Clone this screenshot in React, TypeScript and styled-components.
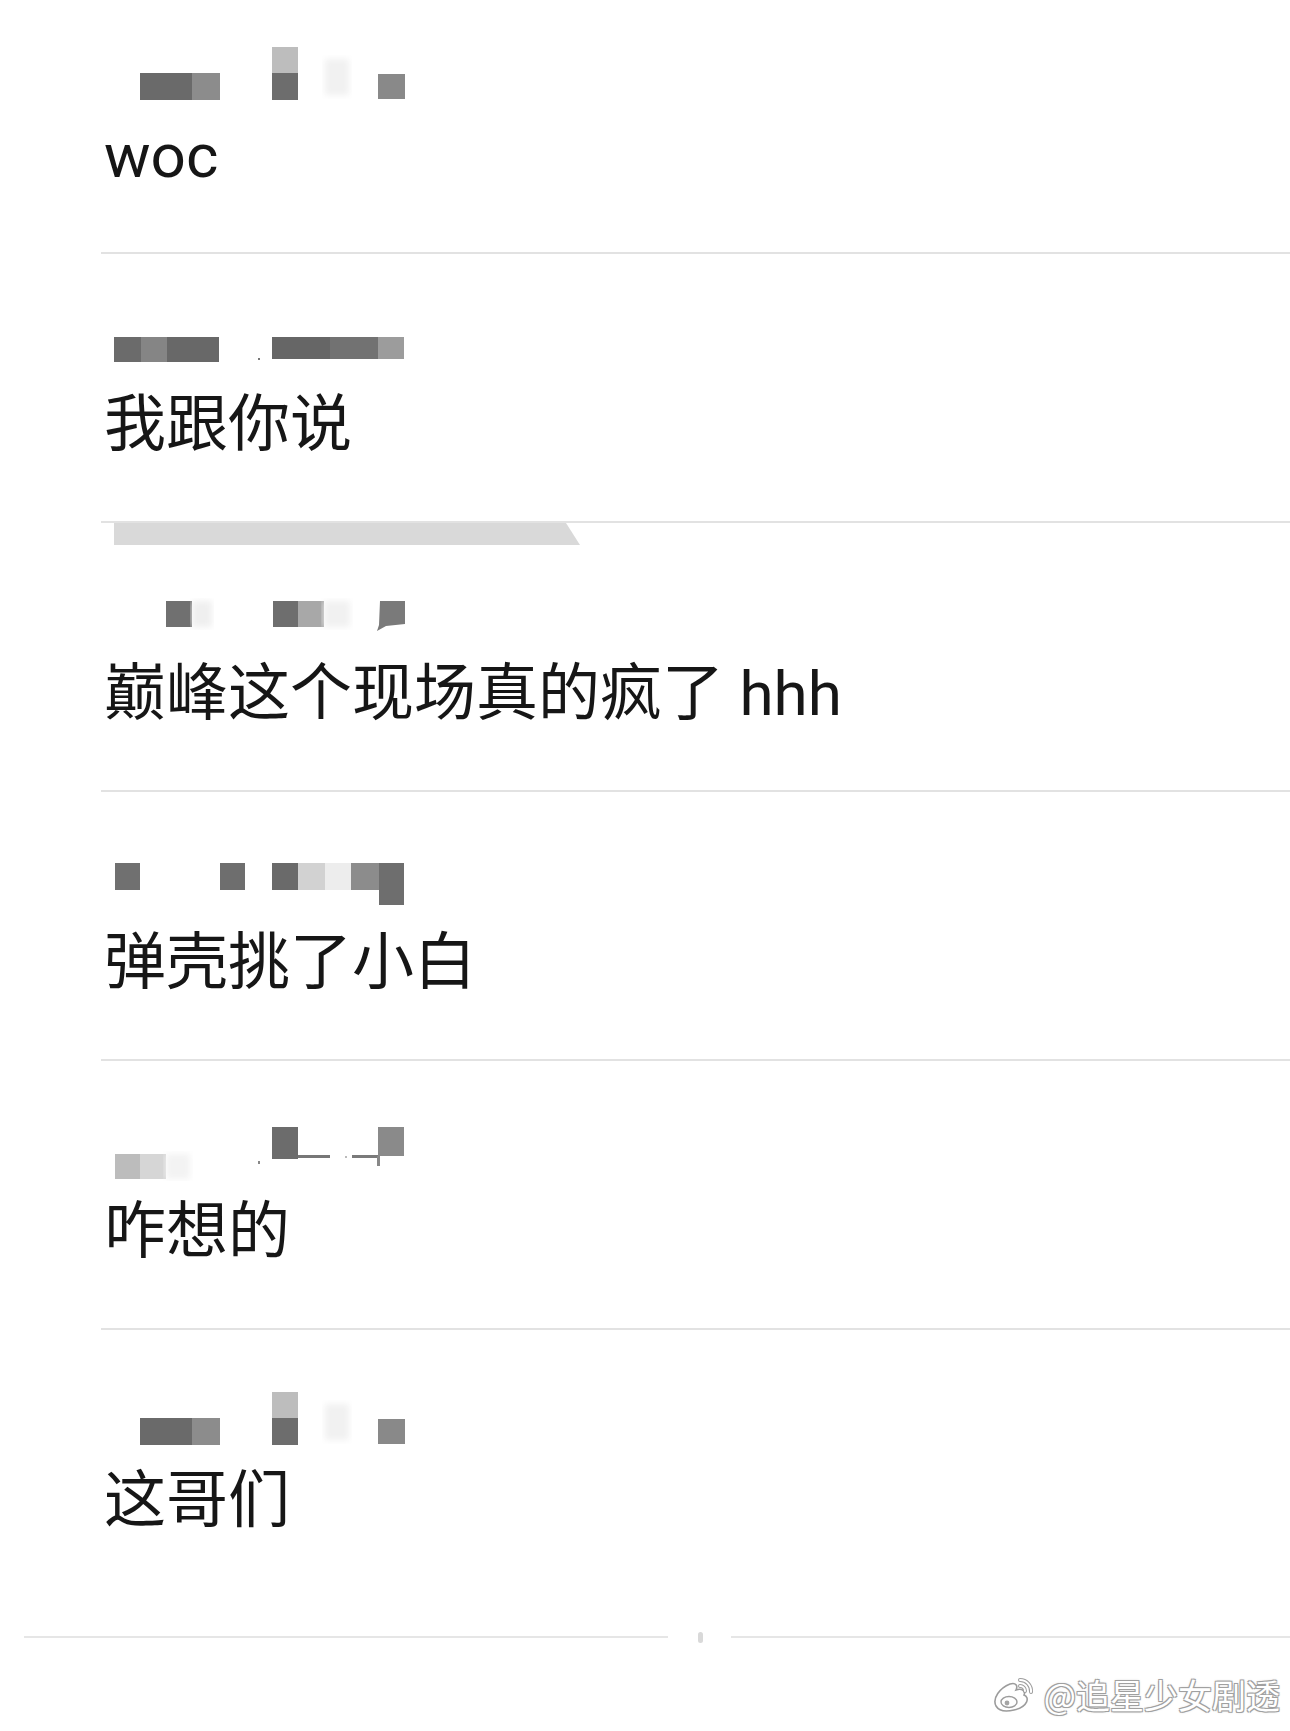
import React from 'react';
import styled, {createGlobalStyle} from 'styled-components';

const GlobalStyle = createGlobalStyle`
    html, body {
        margin: 0;
        padding: 0;
        background: #fff;
    }
    body {
        font-family: Roboto, "Noto Sans CJK SC", sans-serif;
    }
`;

const Page = styled.div`
    width: 1290px;
    height: 1731px;
    overflow: hidden;
    background: #fff;
    display: flex;
    flex-direction: column;
`;

const Feed = styled.div`
    display: flex;
    flex-direction: column;
`;

const Comment = styled.div<{$top: number; $bottom?: number; $last?: boolean}>`
    margin-left: 101px;
    padding: ${p => p.$top}px 0 ${p => p.$bottom ?? 65}px 3px;
    border-bottom: ${p => (p.$last ? 'none' : '2px solid #e2e2e2')};
`;

const RedactBar = styled.div`
    width: 466px;
    height: 22px;
    margin: 0 0 18px 10px;
    background: #d9d9d9;
    clip-path: polygon(0 0, 97% 0, 100% 100%, 0 100%);
`;

const Mosaic = styled.svg`
    display: block;
    margin-left: -3px;
    width: 320px;
    height: 80px;
`;

const Body = styled.div`
    margin-top: 20px;
    font-size: 62px;
    line-height: 62px;
    height: 62px;
    color: #161616;
    white-space: nowrap;
`;

const Divider = styled.div`
    display: flex;
    align-items: center;
    height: 12px;
    margin-left: 24px;
`;

const Rule = styled.div<{$w?: number}>`
    height: 2px;
    background: #e6e6e6;
    ${p => (p.$w ? `width: ${p.$w}px;` : 'flex: 1;')}
`;

const Dot = styled.div`
    width: 5px;
    height: 11px;
    margin: 0 28px 0 30px;
    border-radius: 3px;
    background: #d9d9d9;
`;

const Footer = styled.div`
    display: flex;
    justify-content: flex-end;
    align-items: center;
    gap: 9px;
    margin-top: 32px;
    padding-right: 10px;
`;

const Handle = styled.span`
    font-family: "Noto Sans CJK SC", sans-serif;
    font-size: 34px;
    line-height: 40px;
    color: #fff;
    text-shadow: 1px 1px 0 #a0a0a0, -1px -1px 0 #a0a0a0, 1px -1px 0 #a0a0a0, -1px 1px 0 #a0a0a0, 0 0 3px #b5b5b5;
`;

type Block = {x: number; y: number; w: number; h: number; c: string; blur?: boolean};

// mosaic blocks, x/y relative to the mosaic box
const names: Block[][] = [
    [
        {x: 39, y: 48, w: 52, h: 27, c: '#6a6a6a'},
        {x: 91, y: 48, w: 28, h: 27, c: '#8c8c8c'},
        {x: 171, y: 22, w: 26, h: 26, c: '#bdbdbd'},
        {x: 171, y: 48, w: 26, h: 27, c: '#6d6d6d'},
        {x: 224, y: 34, w: 24, h: 36, c: '#f1f1f1', blur: true},
        {x: 277, y: 49, w: 27, h: 25, c: '#898989'},
    ],
    [
        {x: 13, y: 43, w: 27, h: 25, c: '#6b6b6b'},
        {x: 40, y: 43, w: 26, h: 25, c: '#858585'},
        {x: 66, y: 43, w: 52, h: 25, c: '#686868'},
        {x: 157, y: 64, w: 2, h: 2, c: '#777'},
        {x: 171, y: 43, w: 58, h: 22, c: '#666'},
        {x: 229, y: 43, w: 48, h: 22, c: '#727272'},
        {x: 277, y: 43, w: 26, h: 22, c: '#9c9c9c'},
    ],
    [
        {x: 65, y: 38, w: 26, h: 26, c: '#707070'},
        {x: 91, y: 38, w: 20, h: 26, c: '#efefef', blur: true},
        {x: 172, y: 38, w: 25, h: 26, c: '#6e6e6e'},
        {x: 197, y: 38, w: 26, h: 26, c: '#a8a8a8'},
        {x: 223, y: 38, w: 26, h: 26, c: '#f1f1f1', blur: true},
    ],
    [
        {x: 14, y: 31, w: 25, h: 27, c: '#707070'},
        {x: 119, y: 31, w: 25, h: 27, c: '#6e6e6e'},
        {x: 171, y: 31, w: 26, h: 27, c: '#6a6a6a'},
        {x: 197, y: 31, w: 27, h: 27, c: '#d2d2d2'},
        {x: 224, y: 31, w: 26, h: 27, c: '#ededed'},
        {x: 250, y: 31, w: 28, h: 27, c: '#8c8c8c'},
        {x: 278, y: 31, w: 25, h: 42, c: '#6e6e6e'},
    ],
    [
        {x: 14, y: 53, w: 25, h: 25, c: '#bcbcbc'},
        {x: 39, y: 53, w: 26, h: 25, c: '#d6d6d6'},
        {x: 65, y: 53, w: 24, h: 25, c: '#f3f3f3', blur: true},
        {x: 157, y: 60, w: 2, h: 3, c: '#888'},
        {x: 171, y: 26, w: 26, h: 32, c: '#6c6c6c'},
        {x: 197, y: 54, w: 32, h: 3, c: '#777'},
        {x: 244, y: 55, w: 2, h: 2, c: '#bbb'},
        {x: 251, y: 54, w: 26, h: 3, c: '#7a7a7a'},
        {x: 277, y: 26, w: 26, h: 29, c: '#8a8a8a'},
        {x: 276, y: 55, w: 3, h: 10, c: '#888'},
    ],
];

const NameMosaic: React.FC<{blocks: Block[]; slant?: boolean}> = ({blocks, slant}) => (
    <Mosaic viewBox="0 0 320 80">
        <defs>
            <filter id="soft">
                <feGaussianBlur stdDeviation="3" />
            </filter>
        </defs>
        {blocks.map((b, i) => (
            <rect key={i} x={b.x} y={b.y} width={b.w} height={b.h} fill={b.c} filter={b.blur ? 'url(#soft)' : undefined} />
        ))}
        {slant && <polygon points="279,38 304,38 304,61 285,63 276,68 278,62" fill="#7a7a7a" />}
    </Mosaic>
);

const WeiboLogo = () => (
    <svg width="44" height="36" viewBox="0 0 44 36">
        <path d="M5 29 C 1 21, 9 11, 19 7 C 25 5, 27 9, 25 13 C 31 11, 35 14, 33 18 C 39 20, 37 30, 23 33 C 15 35, 8 34, 5 29 Z" fill="#fff" stroke="#9c9c9c" strokeWidth="1.6" />
        <ellipse cx="18" cy="25" rx="8" ry="5.5" fill="#fff" stroke="#9c9c9c" strokeWidth="1.4" />
        <circle cx="16" cy="26" r="2.4" fill="#a5a5a5" />
        <path d="M29 3 A 11 11 0 0 1 40 15" fill="none" stroke="#9c9c9c" strokeWidth="4" strokeLinecap="round" />
        <path d="M29 3 A 11 11 0 0 1 40 15" fill="none" stroke="#fff" strokeWidth="2" strokeLinecap="round" />
        <path d="M29 9 A 5 5 0 0 1 34 14" fill="none" stroke="#9c9c9c" strokeWidth="4" strokeLinecap="round" />
        <path d="M29 9 A 5 5 0 0 1 34 14" fill="none" stroke="#fff" strokeWidth="2" strokeLinecap="round" />
    </svg>
);

const comments = [
    {text: 'woc', top: 25},
    {text: '我跟你说', top: 40},
    {text: '巅峰这个现场真的疯了 hhh', top: 0, redacted: true, slant: true},
    {text: '弹壳挑了小白', top: 40},
    {text: '咋想的', top: 40},
    {text: '这哥们', top: 40, last: true},
];

const App: React.FC = () => {
    return (
        <Page>
            <GlobalStyle />
            <Feed>
                {comments.map((c, i) => (
                    <Comment key={i} $top={c.top} $bottom={c.last ? 99 : 65} $last={c.last}>
                        {c.redacted ? <RedactBar /> : <></>}
                        <NameMosaic blocks={i === 5 ? names[0] : names[i]} slant={c.slant} />
                        <Body>{c.text}</Body>
                    </Comment>
                ))}
            </Feed>
            <Divider>
                <Rule $w={644} />
                <Dot />
                <Rule />
            </Divider>
            <Footer>
                <WeiboLogo />
                <Handle>@追星少女剧透</Handle>
            </Footer>
        </Page>
    );
};

export default App;
